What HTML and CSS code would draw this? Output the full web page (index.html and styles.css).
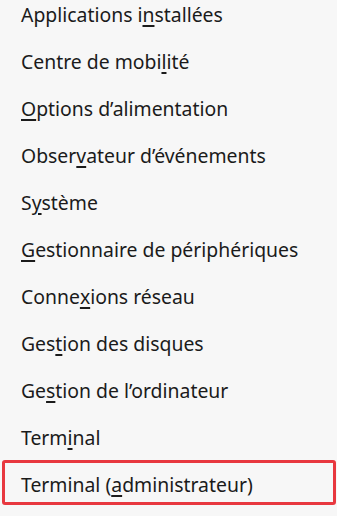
FILE: index.html
```html
<!DOCTYPE html>
<html lang="fr">
<head>
    <meta charset="UTF-8">
    <meta name="viewport" content="width=device-width, initial-scale=1.0">
    <title>Menu Windows + X</title>
    <link rel="stylesheet" href="styles.css">
</head>
<body>
    <ul class="menu">
        <li class="item">Applications i<u>n</u>stallées</li>
        <li class="item">Centre de mobi<u>l</u>ité</li>
        <li class="item"><u>O</u>ptions d’alimentation</li>
        <li class="item">Obser<u>v</u>ateur d’événements</li>
        <li class="item">S<u>y</u>stème</li>
        <li class="item"><u>G</u>estionnaire de périphériques</li>
        <li class="item">Conne<u>x</u>ions réseau</li>
        <li class="item">Ges<u>t</u>ion des disques</li>
        <li class="item">Ge<u>s</u>tion de l’ordinateur</li>
        <li class="item">Term<u>i</u>nal</li>
        <li class="item selected">Terminal (<u>a</u>dministrateur)</li>
    </ul>
</body>
</html>
```

FILE: styles.css
```css
* {
    margin: 0;
    padding: 0;
    box-sizing: border-box;
}

body {
    font-family: 'Noto Sans', 'Open Sans', sans-serif;
    background-color: #f7f7f7;
    color: #1b1b1b;
    height: 100vh;
    overflow: hidden;
}

.menu {
    list-style: none;
    margin-top: -9px;
}

.item {
    height: 47px;
    padding-left: 21px;
    display: flex;
    align-items: center;
    font-size: 19.4px;
    white-space: nowrap;
}

.item u {
    text-decoration-thickness: 1.5px;
    text-underline-offset: 3px;
}

.selected {
    height: 45px;
    margin: -1px 1px 0 2px;
    padding-left: 16px;
    padding-top: 4px;
    border: 3px solid #e8383f;
    border-radius: 3px;
}
```
